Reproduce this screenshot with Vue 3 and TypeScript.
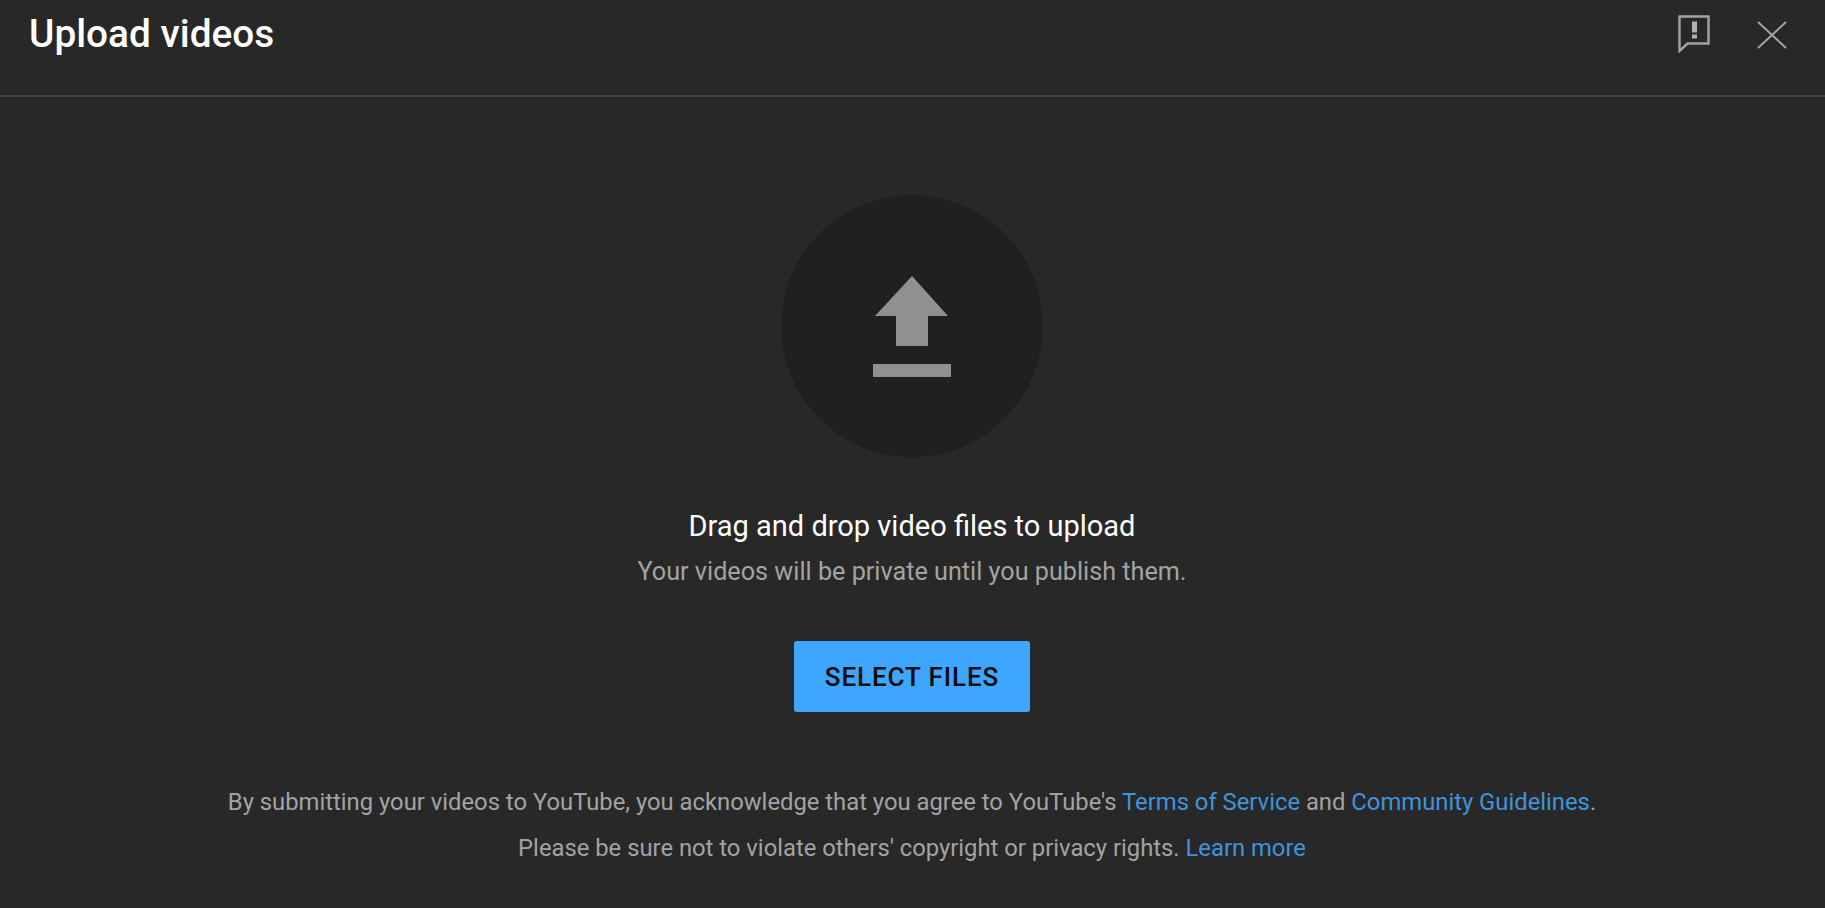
<script setup lang="ts">
const title = 'Upload videos'
</script>

<template>
  <div class="dialog">
    <header class="head">
      <h1 class="title">{{ title }}</h1>
      <div class="actions">
        <svg class="flag" width="32" height="38" viewBox="0 0 32 38" fill="none">
          <path d="M1.5 1.5H30.5V28.5H9.5L1.5 36Z" stroke="#a3a3a3" stroke-width="2.4" />
          <rect x="14" y="6.5" width="5" height="11" fill="#b0b0b0" />
          <rect x="14" y="19.5" width="5" height="4" fill="#b0b0b0" />
        </svg>
        <svg class="close" width="30" height="28" viewBox="0 0 30 28" fill="none">
          <path d="M1 1L29 27M29 1L1 27" stroke="#a3a3a3" stroke-width="2" />
        </svg>
      </div>
    </header>

    <main class="body">
      <div class="circle">
        <svg width="78" height="101" viewBox="0 0 78 101">
          <path d="M39 0L75 40H55V70H23V40H2Z" fill="#909090" />
          <rect x="0" y="88" width="78" height="13" fill="#909090" />
        </svg>
      </div>
      <p class="drag">Drag and drop video files to upload</p>
      <p class="sub">Your videos will be private until you publish them.</p>
      <button class="select">SELECT FILES</button>
      <p class="legal first">
        By submitting your videos to YouTube, you acknowledge that you agree to YouTube's
        <a>Terms of Service</a> and <a>Community Guidelines</a>.
      </p>
      <p class="legal second">
        Please be sure not to violate others' copyright or privacy rights.
        <a>Learn more</a>
      </p>
    </main>
  </div>
</template>

<style>
html, body {
  margin: 0;
  background: #282828;
}
</style>

<style scoped>
.dialog {
  width: 1825px;
  height: 908px;
  overflow: hidden;
  background: #282828;
  font-family: Roboto, "Liberation Sans", sans-serif;
  color: #a3a3a3;
}
.head {
  display: flex;
  justify-content: space-between;
  align-items: flex-start;
  box-sizing: border-box;
  height: 97px;
  padding: 0 38px 0 29px;
  border-bottom: 2px solid #414141;
}
.title {
  margin: 12px 0 0;
  font-size: 38.8px;
  line-height: 44px;
  font-weight: 500;
  color: #fff;
}
.actions {
  display: flex;
  align-items: flex-start;
  gap: 47px;
  padding-top: 15px;
}
.close {
  margin-top: 6px;
}
.body {
  display: flex;
  flex-direction: column;
  align-items: center;
  padding-right: 1px;
}
.circle {
  display: flex;
  justify-content: center;
  align-items: flex-start;
  box-sizing: border-box;
  width: 262px;
  height: 262px;
  margin-top: 98px;
  padding-top: 81px;
  border-radius: 50%;
  background: #202020;
}
p {
  margin: 0;
}
.drag {
  margin-top: 51px;
  font-size: 29px;
  line-height: 36px;
  color: #fff;
}
.sub {
  margin-top: 10px;
  font-size: 25.2px;
  line-height: 36px;
  color: #a3a3a3;
}
.select {
  width: 236px;
  height: 71px;
  margin-top: 51px;
  padding: 0;
  border: 0;
  border-radius: 3px;
  background: #3ea6ff;
  color: #0d0d0d;
  font-family: inherit;
  font-size: 26px;
  font-weight: 500;
  letter-spacing: 0.9px;
}
.legal {
  font-size: 23.8px;
  line-height: 32px;
  color: #a3a3a3;
}
.legal a {
  color: #3f94dc;
}
.first {
  margin-top: 74px;
}
.second {
  margin-top: 14px;
}
</style>
